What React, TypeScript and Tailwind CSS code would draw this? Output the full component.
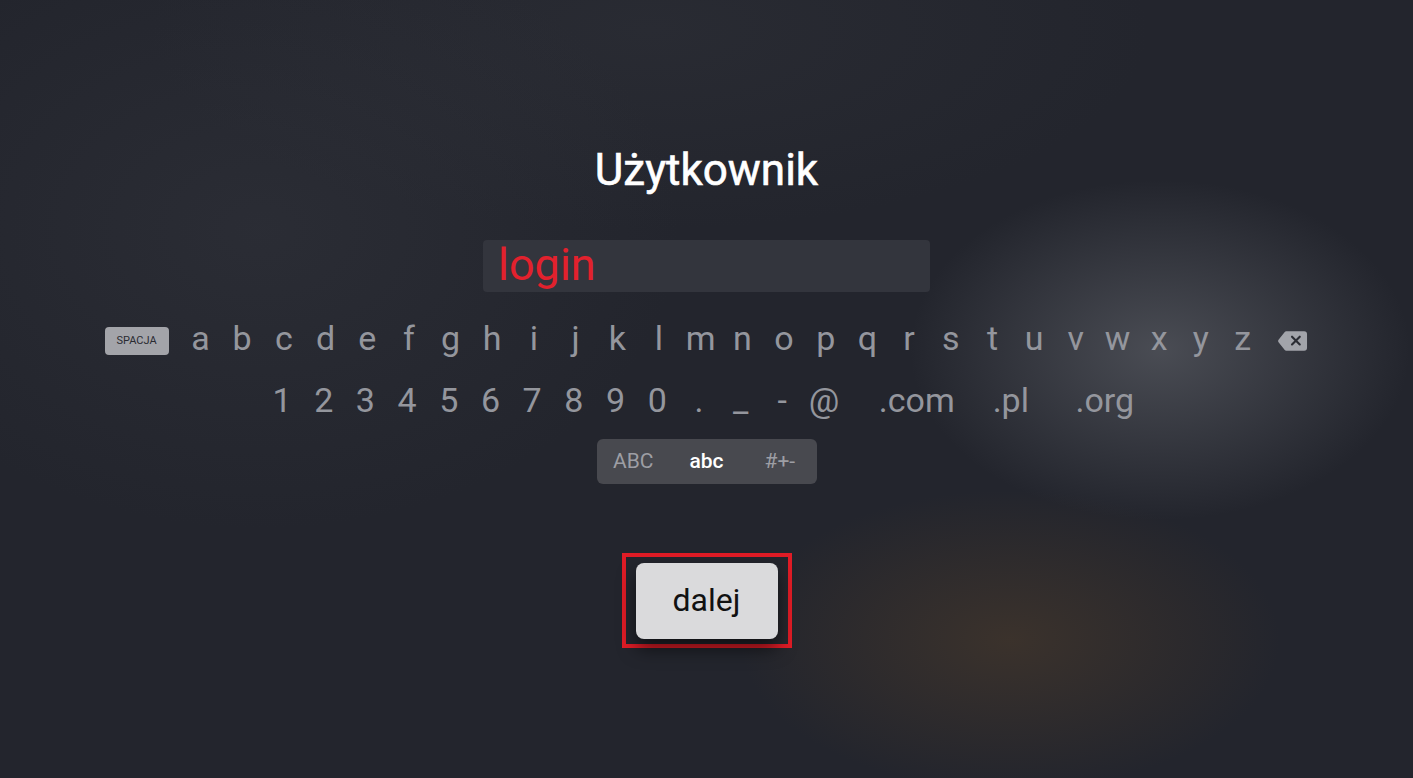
const letters = 'abcdefghijklmnopqrstuvwxyz'.split('')
const symbols = ['1', '2', '3', '4', '5', '6', '7', '8', '9', '0', '.', '_', '-', '@']
const domains = ['.com', '.pl', '.org']

function Backspace() {
    return (
        <svg width="31" height="22" viewBox="0 0 32 22">
            <path
                d="M9.5 1 H28 a3 3 0 0 1 3 3 V18 a3 3 0 0 1 -3 3 H9.5 a2 2 0 0 1 -1.5 -0.7 L1.6 12.3 a2 2 0 0 1 0 -2.6 L8 1.7 a2 2 0 0 1 1.5 -0.7 Z"
                fill="#a2a4aa"
            />
            <path d="M15.5 6.5 L23.5 14.5 M23.5 6.5 L15.5 14.5" stroke="#2b2d34" strokeWidth="2.2" strokeLinecap="round" />
        </svg>
    )
}

export default function App() {
    return (
        <div
            className="relative h-[778px] w-full overflow-hidden bg-[#23252d] bg-[radial-gradient(ellipse_250px_170px_at_1160px_350px,rgba(112,115,122,0.5),transparent),radial-gradient(ellipse_270px_150px_at_1010px_640px,rgba(92,68,42,0.42),transparent),radial-gradient(ellipse_420px_300px_at_260px_230px,rgba(60,62,70,0.3),transparent),radial-gradient(ellipse_500px_200px_at_650px_30px,rgba(55,57,64,0.3),transparent)] font-['Roboto','Liberation_Sans',sans-serif]"
        >
            <div className="flex flex-col items-center">
                {/* Title */}
                <h1 className="mt-[144px] h-[52px] text-[44px] leading-[52px] font-normal text-white [-webkit-text-stroke:0.6px_white]">
                    Użytkownik
                </h1>

                {/* Input */}
                <div className="mt-[44px] flex h-[52px] w-[447px] items-center rounded-[4px] bg-[#33353d] px-[15px]">
                    <span className="text-[45px] leading-none text-[#e2212d] -mt-[4px]">login</span>
                </div>

                {/* Letters row */}
                <div className="mt-[27px] flex h-[44px] items-center text-[34px] font-normal text-[#94969d]">
                    <div className="mr-[11px] flex h-[28px] w-[64px] items-center justify-center rounded-[4px] bg-[#a3a4a9] text-[11px] font-normal text-[#2a2b31]">
                        SPACJA
                    </div>
                    {letters.map((l) => (
                        <span key={l} className="w-[41.7px] text-center leading-none -mt-[6px]">
                            {l}
                        </span>
                    ))}
                    <div className="ml-[14px] flex items-center">
                        <Backspace />
                    </div>
                </div>

                {/* Numbers row */}
                <div className="mt-[15px] flex h-[44px] items-center text-[34px] font-normal text-[#94969d]">
                    {symbols.map((s) => (
                        <span key={s} className="w-[41.7px] text-center leading-none">
                            {s}
                        </span>
                    ))}
                    <div className="ml-[25px] flex">
                        {domains.map((d) => (
                            <span key={d} className="w-[94px] text-center leading-none">
                                {d}
                            </span>
                        ))}
                    </div>
                </div>

                {/* Case switch */}
                <div className="mt-[17px] flex h-[45px] w-[220px] items-center rounded-[6px] bg-[#48494f] text-[21px]">
                    <span className="flex-1 text-center text-[#9d9ea4]">ABC</span>
                    <span className="flex-1 text-center font-medium text-white">abc</span>
                    <span className="flex-1 text-center text-[#9d9ea4]">#+-</span>
                </div>

                {/* Next button */}
                <div className="mt-[69px] flex h-[95px] w-[170px] items-center justify-center border-4 border-[#e01c26]">
                    <button className="flex h-[76px] w-[142px] items-center justify-center rounded-[8px] bg-[#dadadc] pb-[2px] text-[32px] font-normal text-[#111] shadow-[0_10px_18px_rgba(0,0,0,0.55)]">
                        dalej
                    </button>
                </div>
            </div>
        </div>
    )
}
